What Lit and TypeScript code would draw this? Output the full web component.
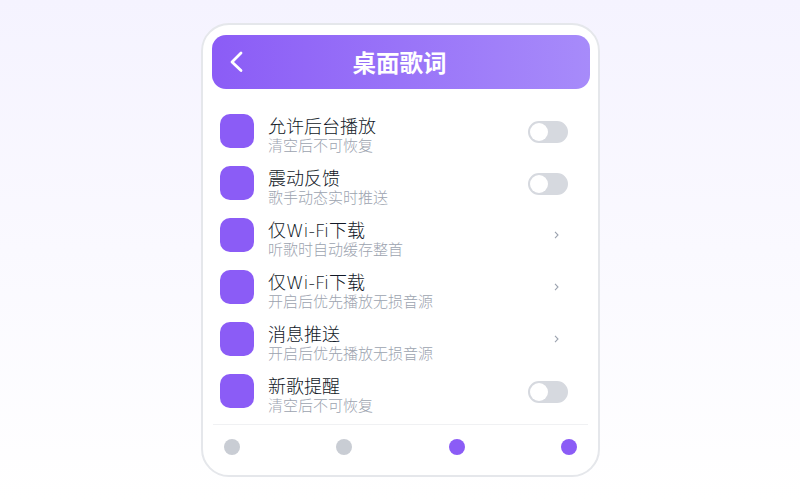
import { LitElement, html, css, nothing } from "lit";
import { customElement } from "lit/decorators.js";

type Row = { title: string; sub: string; kind: "toggle" | "arrow" };

const rows: Row[] = [
  { title: "允许后台播放", sub: "清空后不可恢复", kind: "toggle" },
  { title: "震动反馈", sub: "歌手动态实时推送", kind: "toggle" },
  { title: "仅Wi-Fi下载", sub: "听歌时自动缓存整首", kind: "arrow" },
  { title: "仅Wi-Fi下载", sub: "开启后优先播放无损音源", kind: "arrow" },
  { title: "消息推送", sub: "开启后优先播放无损音源", kind: "arrow" },
  { title: "新歌提醒", sub: "清空后不可恢复", kind: "toggle" },
];

@customElement("app-root")
export class AppRoot extends LitElement {
  static styles = css`
    :host {
      display: block;
      height: 500px;
      overflow: hidden;
      background: linear-gradient(180deg, #f5f3ff, #ffffff);
      font-family: "DejaVu Sans", "Noto Sans CJK SC", sans-serif;
    }
    .page {
      display: flex;
      justify-content: center;
      padding: 23px 0 0 1px;
    }
    .card {
      box-sizing: border-box;
      width: 399px;
      height: 454px;
      padding: 10px 8px 0 9px;
      border: 2px solid #e5e7eb;
      border-radius: 28px;
      background: #fff;
    }
    .header {
      position: relative;
      display: flex;
      align-items: center;
      justify-content: center;
      height: 54px;
      border-radius: 14px;
      background: linear-gradient(90deg, #8b5cf6, #a78bfa);
      color: #fff;
      font-size: 23.5px;
      font-weight: 700;
    }
    .header span {
      margin-right: 3px;
    }
    .back {
      position: absolute;
      left: 16px;
      top: 14px;
      width: 16px;
      height: 24px;
    }
    .list {
      display: flex;
      flex-direction: column;
      margin-top: 16px;
      padding: 0 22px 7px 8px;
    }
    .row {
      display: flex;
      align-items: center;
      height: 52px;
    }
    .icon {
      flex: none;
      width: 34px;
      height: 34px;
      border-radius: 10px;
      background: #8b5cf6;
    }
    .text {
      flex: 1;
      display: flex;
      flex-direction: column;
      margin-left: 14px;
      padding-top: 8px;
    }
    .title {
      font-size: 18px;
      font-weight: 300;
      line-height: 22px;
      color: #111827;
    }
    .sub {
      font-size: 15px;
      font-weight: 300;
      line-height: 16px;
      color: #9ca3af;
    }
    .toggle {
      position: relative;
      box-sizing: border-box;
      width: 40px;
      height: 22px;
      margin-top: 2px;
      border: 2px solid #d6d9df;
      border-radius: 11px;
      background: #d6d9df;
    }
    .toggle::after {
      content: "";
      position: absolute;
      left: 0;
      top: 0;
      width: 18px;
      height: 18px;
      border-radius: 50%;
      background: #fff;
    }
    .arrow {
      width: 5px;
      height: 8px;
      margin-right: 9px;
    }
    .nav {
      display: flex;
      justify-content: space-between;
      margin: 0 2px 0 1px;
      padding: 14px 11px 0;
      border-top: 1px solid #f0f1f3;
    }
    .dot {
      width: 16px;
      height: 16px;
      border-radius: 50%;
      background: #c9cdd4;
    }
    .dot.on {
      background: #8b5cf6;
    }
  `;

  renderRow(r: Row) {
    return html`
      <div class="row">
        <div class="icon"></div>
        <div class="text">
          <div class="title">${r.title}</div>
          <div class="sub">${r.sub}</div>
        </div>
        ${r.kind === "toggle"
          ? html`<div class="toggle"></div>`
          : nothing}
        ${r.kind === "arrow"
          ? html`<svg class="arrow" viewBox="0 0 5 8" fill="none" stroke="#9ca3af" stroke-width="1.1">
              <path d="M1 .8 4 4 1 7.2" />
            </svg>`
          : nothing}
      </div>
    `;
  }

  render() {
    return html`
      <div class="page">
        <div class="card">
          <div class="header">
            <svg class="back" viewBox="0 0 16 24" fill="none" stroke="#fff" stroke-width="2.8" stroke-linecap="round" stroke-linejoin="round">
              <path d="M13 4 4 13l9 8.5" />
            </svg>
            <span>桌面歌词</span>
          </div>
          <div class="list">${rows.map((r) => this.renderRow(r))}</div>
          <div class="nav">
            <div class="dot"></div>
            <div class="dot"></div>
            <div class="dot on"></div>
            <div class="dot on"></div>
          </div>
        </div>
      </div>
    `;
  }
}
